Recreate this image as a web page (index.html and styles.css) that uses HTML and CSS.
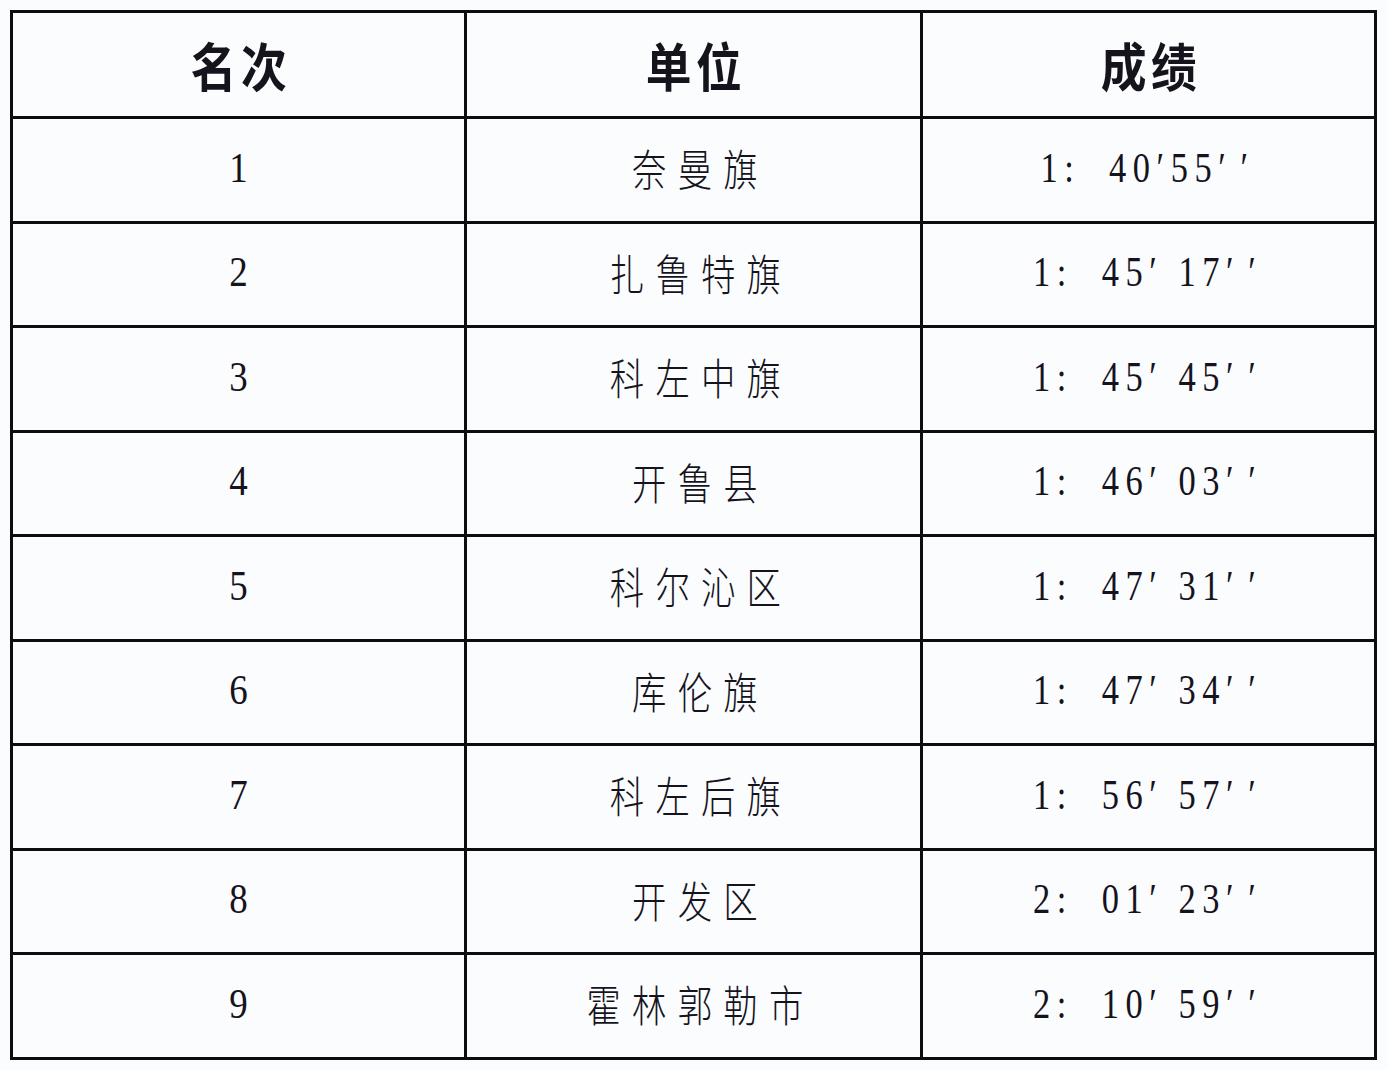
FILE: index.html
```html
<!DOCTYPE html>
<html lang="zh">
<head>
<meta charset="utf-8">
<title>成绩表</title>
<link rel="stylesheet" href="styles.css">
</head>
<body>
<div class="table">
  <div class="cell head"><span class="t">名次</span></div>
  <div class="cell head"><span class="t">单位</span></div>
  <div class="cell head"><span class="t">成绩</span></div>

  <div class="cell num"><span class="t">1</span></div>
  <div class="cell name"><span class="t">奈曼旗</span></div>
  <div class="cell time"><span class="t"><span class="hr">1:</span><span class="ms">40′55<span class="dp">′′</span></span></span></div>

  <div class="cell num"><span class="t">2</span></div>
  <div class="cell name"><span class="t">扎鲁特旗</span></div>
  <div class="cell time"><span class="t"><span class="hr">1:</span><span class="ms">45′ 17<span class="dp">′′</span></span></span></div>

  <div class="cell num"><span class="t">3</span></div>
  <div class="cell name"><span class="t">科左中旗</span></div>
  <div class="cell time"><span class="t"><span class="hr">1:</span><span class="ms">45′ 45<span class="dp">′′</span></span></span></div>

  <div class="cell num"><span class="t">4</span></div>
  <div class="cell name"><span class="t">开鲁县</span></div>
  <div class="cell time"><span class="t"><span class="hr">1:</span><span class="ms">46′ 03<span class="dp">′′</span></span></span></div>

  <div class="cell num"><span class="t">5</span></div>
  <div class="cell name"><span class="t">科尔沁区</span></div>
  <div class="cell time"><span class="t"><span class="hr">1:</span><span class="ms">47′ 31<span class="dp">′′</span></span></span></div>

  <div class="cell num"><span class="t">6</span></div>
  <div class="cell name"><span class="t">库伦旗</span></div>
  <div class="cell time"><span class="t"><span class="hr">1:</span><span class="ms">47′ 34<span class="dp">′′</span></span></span></div>

  <div class="cell num"><span class="t">7</span></div>
  <div class="cell name"><span class="t">科左后旗</span></div>
  <div class="cell time"><span class="t"><span class="hr">1:</span><span class="ms">56′ 57<span class="dp">′′</span></span></span></div>

  <div class="cell num"><span class="t">8</span></div>
  <div class="cell name"><span class="t">开发区</span></div>
  <div class="cell time"><span class="t"><span class="hr">2:</span><span class="ms">01′ 23<span class="dp">′′</span></span></span></div>

  <div class="cell num"><span class="t">9</span></div>
  <div class="cell name"><span class="t">霍林郭勒市</span></div>
  <div class="cell time"><span class="t"><span class="hr">2:</span><span class="ms">10′ 59<span class="dp">′′</span></span></span></div>
</div>
</body>
</html>
```

FILE: styles.css
```css
html, body {
  margin: 0;
  padding: 0;
  background: #fbfcfe;
}

body {
  padding: 10px 0 0 10px;
  color: #15131c;
  font-family: "Liberation Serif", "Noto Sans CJK SC", serif;
}

.table {
  display: grid;
  grid-template-columns: 454px 456px 454px;
  grid-template-rows: 106px repeat(9, 104.5px);
  width: fit-content;
  border-top: 3px solid #0d0d10;
  border-left: 3px solid #0d0d10;
}

.cell {
  box-sizing: border-box;
  border-right: 3px solid #0d0d10;
  border-bottom: 3px solid #0d0d10;
  display: flex;
  align-items: center;
  justify-content: center;
  overflow: hidden;
}

.t {
  display: inline-block;
  white-space: pre;
  line-height: 1;
}

.head .t {
  font-family: "Noto Sans CJK SC", sans-serif;
  font-weight: 700;
  font-size: 52px;
  letter-spacing: 5px;
  transform: scaleX(0.88);
  margin-right: -5px;
}

.num .t {
  font-family: "Liberation Serif", serif;
  font-size: 42px;
  transform: scaleX(0.88);
  margin-top: -4px;
}

.name .t {
  font-family: "Noto Sans CJK SC", sans-serif;
  font-weight: 300;
  font-size: 43px;
  letter-spacing: 14px;
  transform: scaleX(0.8);
  margin-right: -14px;
  margin-top: -4px;
}

.time .t {
  font-family: "Liberation Serif", serif;
  font-size: 42px;
  letter-spacing: 8px;
  transform: scaleX(0.82);
  margin-top: -4px;
  margin-right: -6px;
}

.time .ms {
  margin-left: 35px;
}

.time .dp {
  letter-spacing: 18px;
}
```
